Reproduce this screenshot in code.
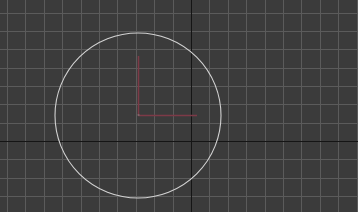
import React from 'react';

const W = 358;
const H = 212;
const ORIGIN_X = 191;
const ORIGIN_Y = 141;
const STEP_X = 18.4;
const STEP_Y = 18.35;

function gridLines(origin: number, step: number, max: number) {
  const out: number[] = [];
  let v = origin - Math.floor(origin / step) * step;
  for (; v < max; v += step) out.push(Math.round(v) + 0.5);
  return out;
}

export default function App() {
  const xs = gridLines(ORIGIN_X, STEP_X, W);
  const ys = gridLines(ORIGIN_Y, STEP_Y, H);

  return (
    <div className="w-[358px] h-[212px] bg-[#3b3b3b] overflow-hidden">
      {/* perspective viewport: home grid, circle, transform gizmo */}
      <svg width={W} height={H} viewBox={`0 0 ${W} ${H}`} className="block">
        {xs.map((x) => (
          <line key={`x${x}`} x1={x} y1={0} x2={x} y2={H} stroke="#5b5b5b" strokeWidth={1} />
        ))}
        {ys.map((y) => (
          <line key={`y${y}`} x1={0} y1={y} x2={W} y2={y} stroke="#5b5b5b" strokeWidth={1} />
        ))}
        <line x1={ORIGIN_X + 0.5} y1={0} x2={ORIGIN_X + 0.5} y2={H} stroke="#151515" strokeWidth={1} />
        <line x1={0} y1={ORIGIN_Y + 0.5} x2={W} y2={ORIGIN_Y + 0.5} stroke="#151515" strokeWidth={1} />

        <ellipse cx={138} cy={115.5} rx={83} ry={82.5} fill="none" stroke="#d2d2d2" strokeWidth={1.1} />

        <line x1={138.5} y1={56} x2={138.5} y2={115} stroke="#7d3a47" strokeWidth={1.5} />
        <line x1={138} y1={115.5} x2={197} y2={115.5} stroke="#7d3a47" strokeWidth={1.5} />
        <rect x={137.5} y={114} width={2} height={2} fill="#8a8a8a" opacity={0.5} />
      </svg>
    </div>
  );
}
